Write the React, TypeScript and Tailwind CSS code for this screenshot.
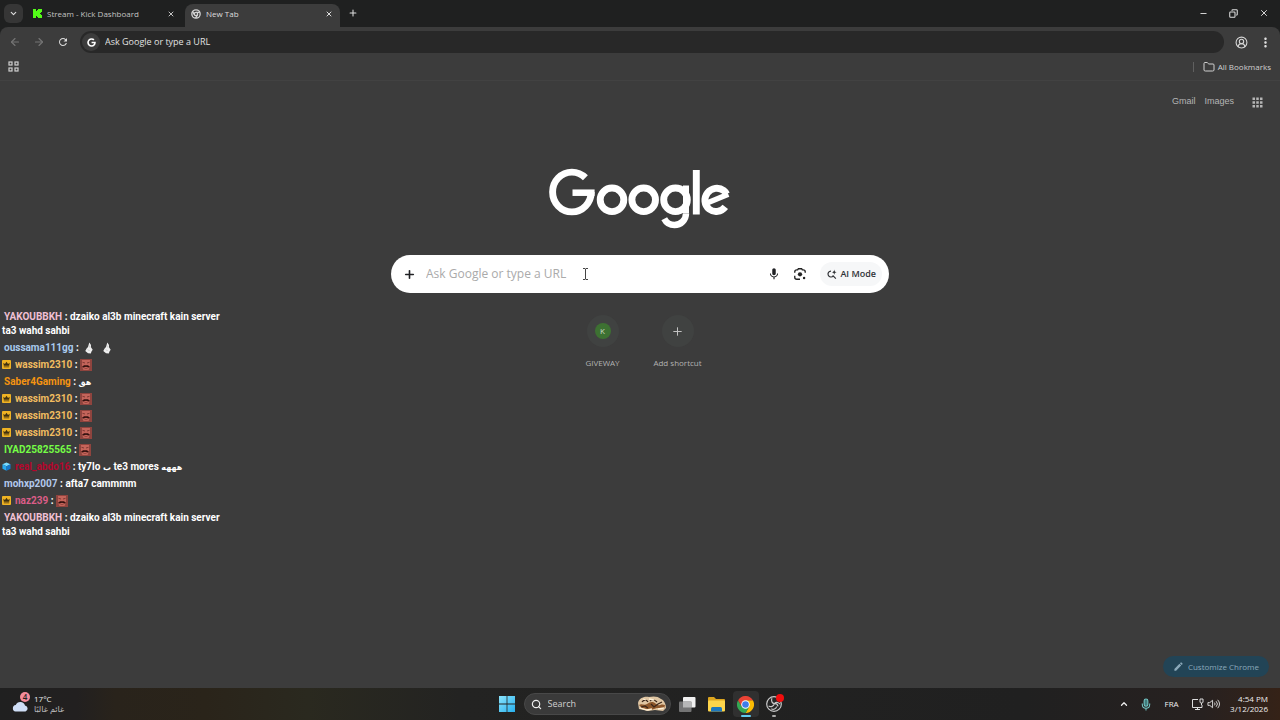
import React from "react";
import {
  ArrowLeft, ArrowRight, ChevronDown, ChevronUp, CircleUserRound, Copy, Folder,
  Minus, Plus, Search, X,
} from "lucide-react";
import { MdEdit, MdMic, MdMoreVert, MdRefresh, MdApps } from "react-icons/md";
import { FaGoogle } from "react-icons/fa";

function KickIcon() {
  return (
    <svg viewBox="0 0 9 9" className="size-[9px] shrink-0" fill="#53fc18" shapeRendering="crispEdges" aria-hidden="true">
      <path d="M0 0h3v2h1V1h1V0h4v3H8v1H7v1h1v1h1v3H5V8H4V7H3v2H0z" />
    </svg>
  );
}

function ChromeMono() {
  return (
    <svg viewBox="0 0 24 24" className="size-[10px] shrink-0" fill="none" stroke="#d4d4d4" strokeWidth="3.2" aria-hidden="true">
      <circle cx="12" cy="12" r="10" />
      <circle cx="12" cy="12" r="4" />
      <path d="M12 8h9M8.500 14 4 6.500M15.500 14 11 22" />
    </svg>
  );
}

function ChromeLogo() {
  return (
    <svg viewBox="0 0 48 48" className="size-[17px]" aria-hidden="true">
      <path d="M24 12h20.8A24 24 0 0 1 24 48l10.4-18z" fill="#fbbc04" />
      <path d="M13.6 30 3.2 12A24 24 0 0 0 24 48l10.4-18z" fill="#34a853" />
      <path d="M24 12h20.8A24 24 0 0 0 3.2 12l10.4 18z" fill="#ea4335" />
      <circle cx="24" cy="24" r="12" fill="#fff" />
      <circle cx="24" cy="24" r="9.3" fill="#3f7de8" />
    </svg>
  );
}

function AppsOutline() {
  return (
    <svg viewBox="0 0 11 11" className="size-[11px]" fill="none" stroke="#d0d0d0" strokeWidth="1.2" aria-hidden="true">
      <rect x="1" y="1" width="3" height="3" />
      <rect x="7" y="1" width="3" height="3" />
      <rect x="1" y="7" width="3" height="3" />
      <rect x="7" y="7" width="3" height="3" />
    </svg>
  );
}

/* Wordmark built from rings, part rings and bars. */
function GoogleLogo() {
  return (
    <svg viewBox="0 0 182 62" className="h-[62px] w-[182px]" fill="none" stroke="#fff" strokeWidth="6.9" role="img" aria-label="Google">
      <ellipse cx="22.9" cy="25" rx="19.300" ry="19.900" pathLength="360" strokeDasharray="314 46" />
      <line x1="23.5" y1="25.700" x2="45.600" y2="25.700" strokeWidth="6.500" />
      <circle cx="63" cy="32.8" r="11.800" />
      <circle cx="94.700" cy="32.8" r="11.800" />
      <circle cx="126.500" cy="32.8" r="11.800" />
      <line x1="137" y1="18.5" x2="137" y2="46.500" strokeWidth="6" />
      <circle cx="125.500" cy="46.500" r="11.500" pathLength="360" strokeDasharray="153 207" strokeWidth="6.400" />
      <line x1="147.300" y1="3" x2="147.300" y2="47.5" />
      <ellipse cx="167.400" cy="32.8" rx="11.300" ry="11.800" pathLength="360" strokeDasharray="293 67" transform="rotate(38 167.4 32.8)" />
      <line x1="157.500" y1="36.300" x2="179.300" y2="27.300" strokeWidth="5.400" />
    </svg>
  );
}

function LensIcon() {
  return (
    <svg viewBox="0 0 24 24" className="size-[14px]" fill="none" stroke="#222" strokeWidth="2.3" aria-hidden="true">
      <path d="M3 10V8.500A3.500 3.500 0 0 1 6.500 5H8l1.200-2h5.600L16 5h1.500A3.500 3.500 0 0 1 21 8.500V10M3 15v2.500A3.500 3.500 0 0 0 6.500 21H12" />
      <circle cx="12" cy="12.500" r="3.700" fill="#222" stroke="none" />
      <circle cx="19" cy="19" r="2.100" fill="#222" stroke="none" />
    </svg>
  );
}

function AiSearchIcon() {
  return (
    <svg viewBox="0 0 24 24" className="size-[11px]" fill="none" stroke="#303236" strokeWidth="2.6" aria-hidden="true">
      <path d="M11 4.500a6.500 6.500 0 1 0 5 10.500M14.500 14l7 7" />
      <path d="M18 1c.6 4 2 5.400 5.500 6-3.500.6-4.900 2-5.500 6-.6-4-2-5.400-5.500-6 3.500-.6 4.900-2 5.500-6z" fill="#303236" stroke="none" />
    </svg>
  );
}

function CrownBadge() {
  return (
    <svg viewBox="0 0 10 10" className="size-[9px] shrink-0" aria-hidden="true">
      <rect width="10" height="10" rx="1" fill="#f0b323" />
      <path d="M1.500 3 3.300 4.500 5 2l1.700 2.500L8.500 3 8 6.500H2zM2 7.200h6v.9H2z" fill="#40300e" />
    </svg>
  );
}

function CubeBadge() {
  return (
    <svg viewBox="0 0 10 10" className="size-[9px] shrink-0" aria-hidden="true">
      <path d="M5 0.500 9.500 2.500 5 4.800.5 2.500z" fill="#7adcff" />
      <path d="M.5 2.500 5 4.800V9.800L.5 7.500z" fill="#28aaf0" />
      <path d="M9.500 2.500 5 4.800V9.800l4.500-2.300z" fill="#1478cc" />
    </svg>
  );
}

function FaceEmote() {
  return (
    <svg viewBox="0 0 12 12" className="size-3 shrink-0" aria-hidden="true">
      <rect width="12" height="12" fill="#8f443e" />
      <path d="M2 1h8v6.500L8.500 11h-5L2 8z" fill="#c4645a" />
      <path d="M2.500 3.300 5 4M9.500 3.300 7 4" stroke="#6b2d29" strokeWidth=".8" />
      <path d="M1.800 8 4 6.300h4L10.200 8l-1.700.4L6 7.700l-2.500.7z" fill="#33110f" />
      <path d="M4.500 9.500h3" stroke="#8a3d38" strokeWidth=".7" />
    </svg>
  );
}

function GhostEmote() {
  return (
    <svg viewBox="0 0 12 12" className="size-3 shrink-0" aria-hidden="true">
      <path d="M6.300.500 8 3v2.300l1.700 2.500L8.500 9.500 7.800 11.500 5 11.300 2.300 9l1.300-2.500L5 5z" fill="#eee" />
      <path d="M5 7.500 6.500 9M6.800 3.500v2" stroke="#a9a9a9" strokeWidth=".6" />
    </svg>
  );
}

type Message = {
  name: string;
  color: string;
  badge?: "crown" | "cube";
  text?: React.ReactNode;
  emote?: "face" | "ghosts";
};

function Ar({ children }: { children: string }) {
  return <bdi lang="ar" className="text-[8px] leading-none">{children}</bdi>;
}

const messages: Message[] = [
  { name: "YAKOUBBKH", color: "text-[#f0c0d4]", text: "dzaiko al3b minecraft kain server ta3 wahd sahbi" },
  { name: "oussama111gg", color: "text-[#a9cbee]", emote: "ghosts" },
  { name: "wassim2310", color: "text-[#f2bd60]", badge: "crown", emote: "face" },
  { name: "Saber4Gaming", color: "text-[#f59410]", text: <Ar>هق</Ar> },
  { name: "wassim2310", color: "text-[#f2bd60]", badge: "crown", emote: "face" },
  { name: "wassim2310", color: "text-[#f2bd60]", badge: "crown", emote: "face" },
  { name: "wassim2310", color: "text-[#f2bd60]", badge: "crown", emote: "face" },
  { name: "IYAD25825565", color: "text-[#75fd46]", emote: "face" },
  { name: "real_abdo16", color: "text-[#b4062c]", badge: "cube", text: <>ty7lo <Ar>ب</Ar> te3 mores <Ar>هههه</Ar></> },
  { name: "mohxp2007", color: "text-[#b3c9ec]", text: "afta7 cammmm" },
  { name: "naz239", color: "text-[#db5d87]", badge: "crown", emote: "face" },
  { name: "YAKOUBBKH", color: "text-[#f0c0d4]", text: "dzaiko al3b minecraft kain server ta3 wahd sahbi" },
];

function ChatMessage({ m }: { m: Message }) {
  return (
    <li>
      <span className="mr-[2px] inline-flex align-[-1px]">
        {m.badge === "crown" && <span className="mr-[2px]"><CrownBadge /></span>}
        {m.badge === "cube" && <span className="mr-[2px]"><CubeBadge /></span>}
      </span>
      <span className={m.color}>{m.name}</span>
      <span> : </span>
      {m.text}
      {m.emote === "face" && <span className="-my-1 inline-flex h-3 align-middle"><FaceEmote /></span>}
      {m.emote === "ghosts" && (
        <span className="-my-1 ml-[2px] inline-flex h-3 gap-[6px] align-middle"><GhostEmote /><GhostEmote /></span>
      )}
    </li>
  );
}

function TabStrip() {
  return (
    <header className="flex h-[27px] shrink-0 items-end bg-[#1f2020] text-[8px] text-[#dedede]">
      <button aria-label="Search tabs" className="mb-1 ml-1 flex size-[19px] shrink-0 items-center justify-center rounded-md bg-[#363636]">
        <ChevronDown size={9} strokeWidth={3} />
      </button>
      <div role="tablist" className="flex h-full items-end">
        <div role="tab" aria-selected="false" className="flex h-[27px] w-[162px] items-center pr-[10px] pl-[10px] text-[#c3c3c3]">
          <KickIcon />
          <span className="ml-[5px] flex-1 truncate">Stream - Kick Dashboard</span>
          <button aria-label="Close Stream tab"><X size={8} strokeWidth={3} /></button>
        </div>
        <div role="tab" aria-selected="true" className="flex h-[23px] w-[155px] items-center rounded-t-lg bg-[#3c3c3c] pr-[7px] pb-1 pl-[6px]">
          <ChromeMono />
          <span className="ml-[5px] flex-1 truncate">New Tab</span>
          <button aria-label="Close New Tab"><X size={8} strokeWidth={3} /></button>
        </div>
      </div>
      <button aria-label="New tab" className="mb-[9px] ml-2"><Plus size={10} strokeWidth={2.5} /></button>
      <div className="mb-[9px] ml-auto flex items-center gap-[21px] pr-[11px]">
        <button aria-label="Minimize"><Minus size={9} strokeWidth={2.5} /></button>
        <button aria-label="Restore"><Copy size={9} strokeWidth={2.8} className="-scale-x-100" /></button>
        <button aria-label="Close window"><X size={10} strokeWidth={2.3} /></button>
      </div>
    </header>
  );
}

function Toolbar() {
  return (
    <div className="flex h-[30px] shrink-0 items-center rounded-t-lg bg-[#3c3c3c] pr-[7px] pl-2">
      <nav className="flex gap-3 pl-px text-[#757575]" aria-label="History">
        <button aria-label="Back"><ArrowLeft size={12} strokeWidth={2.2} /></button>
        <button aria-label="Forward"><ArrowRight size={12} strokeWidth={2.2} /></button>
        <button aria-label="Reload" className="text-[#dcdcdc]"><MdRefresh size={12} /></button>
      </nav>
      <label className="ml-[11px] flex h-[22px] flex-1 items-center gap-[5px] rounded-full bg-[#282828] pl-[2px]">
        <span className="flex size-[18px] items-center justify-center rounded-full bg-[#3c3c3c] text-white"><FaGoogle size={9} /></span>
        <input aria-label="Address bar" className="min-w-0 flex-1 bg-transparent text-[9px] text-[#e2e2e2] outline-none placeholder:text-[#e2e2e2]" placeholder="Ask Google or type a URL" />
      </label>
      <button aria-label="Profile" className="ml-[11px] text-[#d6d6d6]"><CircleUserRound size={13} strokeWidth={2} /></button>
      <button aria-label="Menu" className="ml-[10px] text-[#e0e0e0]"><MdMoreVert size={15} /></button>
    </div>
  );
}

function Shortcut({ label, children }: { label: string; children: React.ReactNode }) {
  return (
    <span className="flex w-[75px] flex-col items-center gap-[9px]">
      <span className="flex size-8 items-center justify-center rounded-full bg-[#404241]">{children}</span>
      <span className="text-[8px] leading-[14px] text-[#b2b2b2]">{label}</span>
    </span>
  );
}

function Taskbar() {
  return (
    <footer className="grid h-8 shrink-0 grid-cols-[1fr_auto_1fr] items-center bg-[linear-gradient(90deg,#202020_0%,#222020_6%,#29231b_9%,#2a241a_16%,#2a291f_24%,#232322_36%,#202020_80%,#272120_94%,#352217_100%)] text-[#eee]">
      <button aria-label="Weather" className="flex items-center justify-self-start pl-3 text-left">
        <span className="relative h-5 w-[18px]">
          <svg viewBox="0 0 18 12" className="mt-[6px] h-3 w-[18px]" aria-hidden="true">
            <path d="M3.500 11.500a3.300 3.300 0 0 1 .2-6.500A5 5 0 0 1 13 5.500a3.100 3.100 0 0 1 .5 6z" fill="#cfdef6" />
          </svg>
          <span className="absolute -top-[2px] right-0 flex size-[10px] items-center justify-center rounded-full bg-[#f48b9a] text-[8px] font-semibold text-[#222]">4</span>
        </span>
        <span className="ml-1 flex flex-col text-[8px] leading-[10px]">
          <span>17°C</span>
          <span dir="rtl" className="text-[#bbb]">غائم غالبًا</span>
        </span>
      </button>
      <div className="flex h-8 items-center">
        <button aria-label="Start" className="px-[1px]">
          <svg viewBox="0 0 16 16" className="size-4" aria-hidden="true">
            <defs>
              <linearGradient id="start" x1="0" y1="0" x2="1" y2="1"><stop stopColor="#8be4fc" /><stop offset="1" stopColor="#27b0ee" /></linearGradient>
            </defs>
            <path d="M0 0h7.600v7.600H0zM8.400 0H16v7.600H8.400zM0 8.400h7.600V16H0zM8.400 8.400H16V16H8.400z" fill="url(#start)" />
          </svg>
        </button>
        <label className="ml-[8px] flex h-[22px] w-[147px] items-center rounded-full border border-[#484848] bg-[#3a3a3a] pr-[3px] pl-[6px]">
          <Search size={11} strokeWidth={2.6} className="shrink-0" />
          <input aria-label="Search Windows" className="ml-[6px] w-0 min-w-0 flex-1 bg-transparent text-[9px] outline-none placeholder:text-[#d0d0d0]" placeholder="Search" />
          <svg viewBox="0 0 30 16" className="h-4 w-[30px] shrink-0" aria-hidden="true">
            <path d="M1 7C2 2 7 0 12 1c4-1 9-1 12 2 3 1 5 5 5 9l-3 3-8-1-7 1-9-2z" fill="#dfc5a2" />
            <path d="M2 9c3-2 5 1 8-1s6-3 9 0 5-1 9 1l-1 4-7-1-6 2-9-2z" fill="#8d572b" />
            <path d="M5 6c2-3 5-2 6 0M13 5c2-2 5-1 7 1M21 8l4-2M4 11l4-1 3 2M14 8l3 3 4-3" stroke="#39251a" strokeWidth="1.2" fill="none" />
            <path d="M3 12l7 2 5-1M21 13l6-1M12 3l5 1M6 3l3 1" stroke="#fff0d6" strokeWidth="1.3" fill="none" />
          </svg>
        </label>
        <button aria-label="Task view" className="ml-2">
          <svg viewBox="0 0 17 15" className="h-[15px] w-[17px]" aria-hidden="true">
            <rect x="4" y="0" width="12.5" height="10.5" rx="1" fill="#f0f0f0" />
            <rect x="0" y="4.5" width="12.5" height="10.5" rx="1" fill="#747474" />
            <path d="M4 4.500h8.500v6H4z" fill="#b7b7b7" />
          </svg>
        </button>
        <button aria-label="File Explorer" className="ml-3">
          <svg viewBox="0 0 17 15" className="h-[15px] w-[17px]" aria-hidden="true">
            <path d="M0 1q0-1 1-1h5l2 2h8q1 0 1 1v3H0z" fill="#dca51f" />
            <rect x="0" y="3.5" width="17" height="11" rx="1" fill="#fdd54b" />
            <path d="M3 14.500v-3Q3 10 4.500 10h8q1.500 0 1.500 1.500v3z" fill="#1e78bd" />
          </svg>
        </button>
        <button aria-label="Chrome" className="relative ml-2 flex h-[26px] w-[26px] items-center justify-center rounded-sm bg-[#303030]">
          <ChromeLogo />
          <span className="absolute bottom-0 h-[2px] w-[10px] rounded-full bg-[#60cdf2]" />
        </button>
        <button aria-label="OBS Studio" className="relative ml-[7px] flex h-[26px] w-[17px] items-center justify-center">
          <svg viewBox="0 0 24 24" className="size-4" fill="none" stroke="#c9c9c9" strokeWidth="1.8" aria-hidden="true">
            <circle cx="12" cy="12" r="11" fill="#262626" />
            <path d="M9 3.500c-2 4 .5 7.500 3.500 8 3.500-.5 5 1 5.500 4M12.500 11.500c-1 4-5 5.500-8.500 3.500M12.500 11.500c3-3 7-2 8.500 1M8 19c3 2 7 .5 8-3" />
          </svg>
          <span className="absolute top-[3px] -right-[1px] size-[8px] rounded-full bg-[#f20d0d]" />
          <span className="absolute bottom-0 h-[2px] w-1 rounded-full bg-[#aaa]" />
        </button>
      </div>
      <div className="flex items-center justify-self-end pr-3 text-[8px]">
        <button aria-label="Hidden icons"><ChevronUp size={10} strokeWidth={3} /></button>
        <svg viewBox="0 0 12 14" className="ml-[11px] h-[13px] w-3" fill="none" stroke="#75c9c7" strokeWidth="1.1" aria-hidden="true">
          <rect x="4" y="1" width="4" height="8" rx="2" fill="#407b7b" />
          <path d="M2 6v1q0 4 4 4t4-4V6M6 11v2.500" />
        </svg>
        <span className="ml-3 w-[15px] text-center">FRA</span>
        <svg viewBox="0 0 13 12" className="ml-3 h-3 w-[13px]" fill="none" stroke="#ddd" strokeWidth="1" aria-hidden="true">
          <path d="M7 1.500H1.500v8H11V7M4 11.500h5M6.500 9.500v2M9 1v3q0 1 1.500 1T12 4V1zM10.500 5v2" />
        </svg>
        <svg viewBox="0 0 14 12" className="ml-[3px] h-3 w-[13px]" fill="none" stroke="#ddd" strokeWidth="1" aria-hidden="true">
          <path d="M1 4.500h2L6 2v8L3 7.500H1zM8 4.500q1.500 1.500 0 3M9.800 3q3 3 0 6M11.500 1.500q4 4.500 0 9" />
        </svg>
        <time className="ml-[10px] text-right leading-[10px]"><span className="block">4:54 PM</span><span className="block">3/12/2026</span></time>
      </div>
    </footer>
  );
}

export default function App() {
  return (
    <div className="relative flex min-h-screen flex-col bg-[#1f2020] font-['Open_Sans','Noto_Sans','DejaVu_Sans',sans-serif]">
      <TabStrip />
      <Toolbar />
      <div className="flex h-[24px] shrink-0 items-center justify-between border-b border-[#424242] bg-[#3c3c3c] pr-[9px] pb-[4px] pl-2 text-[8px] text-[#d0d0d0]">
        <button aria-label="Apps"><AppsOutline /></button>
        <button className="flex items-center gap-[3px]">
          <span className="mr-[6px] h-[10px] w-px bg-[#606060]" />
          <Folder size={12} strokeWidth={2} />
          All Bookmarks
        </button>
      </div>
      <main className="flex flex-1 flex-col bg-[#3c3c3c]">
        <nav className="flex h-[42px] items-center justify-end gap-[9px] pr-[15px] font-['Liberation_Sans',sans-serif] text-[9px] text-[#b5b5b5]" aria-label="Google apps">
          <a href="#gmail">Gmail</a>
          <a href="#images">Images</a>
          <button aria-label="Google apps" className="ml-[7px]"><MdApps size={15} /></button>
        </nav>
        <div className="mt-[44px] flex flex-col items-center">
          <GoogleLogo />
          <form className="mt-[26px] flex h-[38px] w-[498px] max-w-full items-center rounded-full bg-white pr-[7px] pl-3 text-[#202124]" onSubmit={(e) => e.preventDefault()}>
            <button type="button" aria-label="Add"><Plus size={13} strokeWidth={3} /></button>
            <input aria-label="Search" className="ml-[10px] min-w-0 flex-1 bg-transparent text-[12px] outline-none placeholder:text-[#aaa]" placeholder="Ask Google or type a URL" />
            <button type="button" aria-label="Voice search"><MdMic size={14} /></button>
            <button type="button" aria-label="Image search" className="ml-3"><LensIcon /></button>
            <button type="button" className="ml-[13px] flex h-6 items-center gap-[3px] rounded-full bg-[#f6f7f8] px-[6px] text-[9px] font-semibold text-[#303236]">
              <AiSearchIcon />AI Mode
            </button>
          </form>
          <div className="mt-[22px] flex">
            <a href="#giveway">
              <Shortcut label="GIVEWAY">
                <span className="flex size-4 items-center justify-center rounded-full bg-[#3d7132] text-[8px] text-[#c9d8c4]">K</span>
              </Shortcut>
            </a>
            <button><Shortcut label="Add shortcut"><Plus size={13} strokeWidth={1.8} className="text-[#c4c4c4]" /></Shortcut></button>
          </div>
        </div>
        <button className="mt-auto mr-[11px] mb-[11px] flex h-[21px] items-center gap-1 self-end rounded-full bg-[#224456] px-[10px] text-[8px] text-[#8ba9ba]">
          <MdEdit size={11} />Customize Chrome
        </button>
      </main>
      <Taskbar />
      <ul className="absolute top-[310px] left-[2px] flex w-[220px] flex-col gap-[3px] font-['Roboto','DejaVu_Sans',sans-serif] text-[10px] leading-[14px] font-bold text-white" aria-label="Stream chat">
        {messages.map((m, i) => <ChatMessage key={i} m={m} />)}
      </ul>
      <svg viewBox="0 0 7 12" className="absolute top-[268px] left-[582px] h-3 w-[7px]" fill="none" stroke="#444" strokeWidth="1" aria-hidden="true">
        <path d="M1 .5h2l.5.5.5-.5h2M3.500 1v10M1 11.500h2l.5-.5.5.5h2" />
      </svg>
    </div>
  );
}
